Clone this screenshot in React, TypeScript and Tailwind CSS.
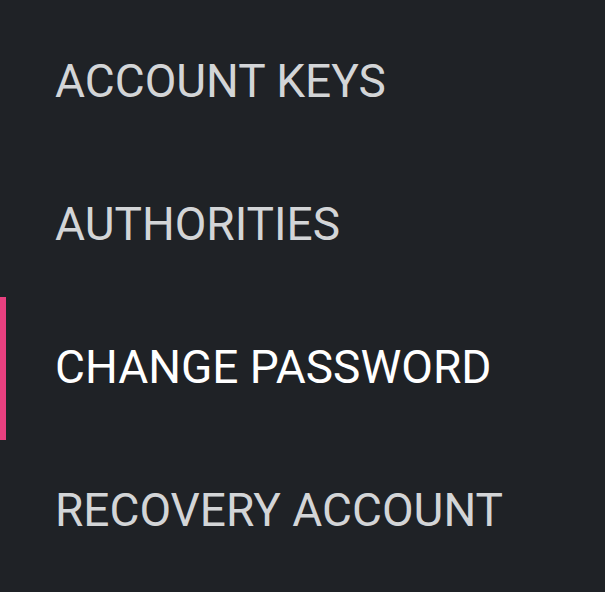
const items = [
  { label: 'ACCOUNT KEYS', active: false },
  { label: 'AUTHORITIES', active: false },
  { label: 'CHANGE PASSWORD', active: true },
  { label: 'RECOVERY ACCOUNT', active: false },
]

export default function App() {
  return (
    <div className="w-[605px] h-[592px] bg-[#1f2226] pt-[11px] font-['Roboto',sans-serif] overflow-hidden">
      <nav className="flex flex-col">
        {items.map((item) => (
          <div
            key={item.label}
            className={`h-[143px] flex items-center pl-[55px] border-l-[6px] ${
              item.active ? 'border-[#e8407f] text-white' : 'border-transparent text-[#d3d5d7]'
            }`}
          >
            <span className="text-[46px] leading-none -ml-[6px] pb-[3px]">{item.label}</span>
          </div>
        ))}
      </nav>
    </div>
  )
}
